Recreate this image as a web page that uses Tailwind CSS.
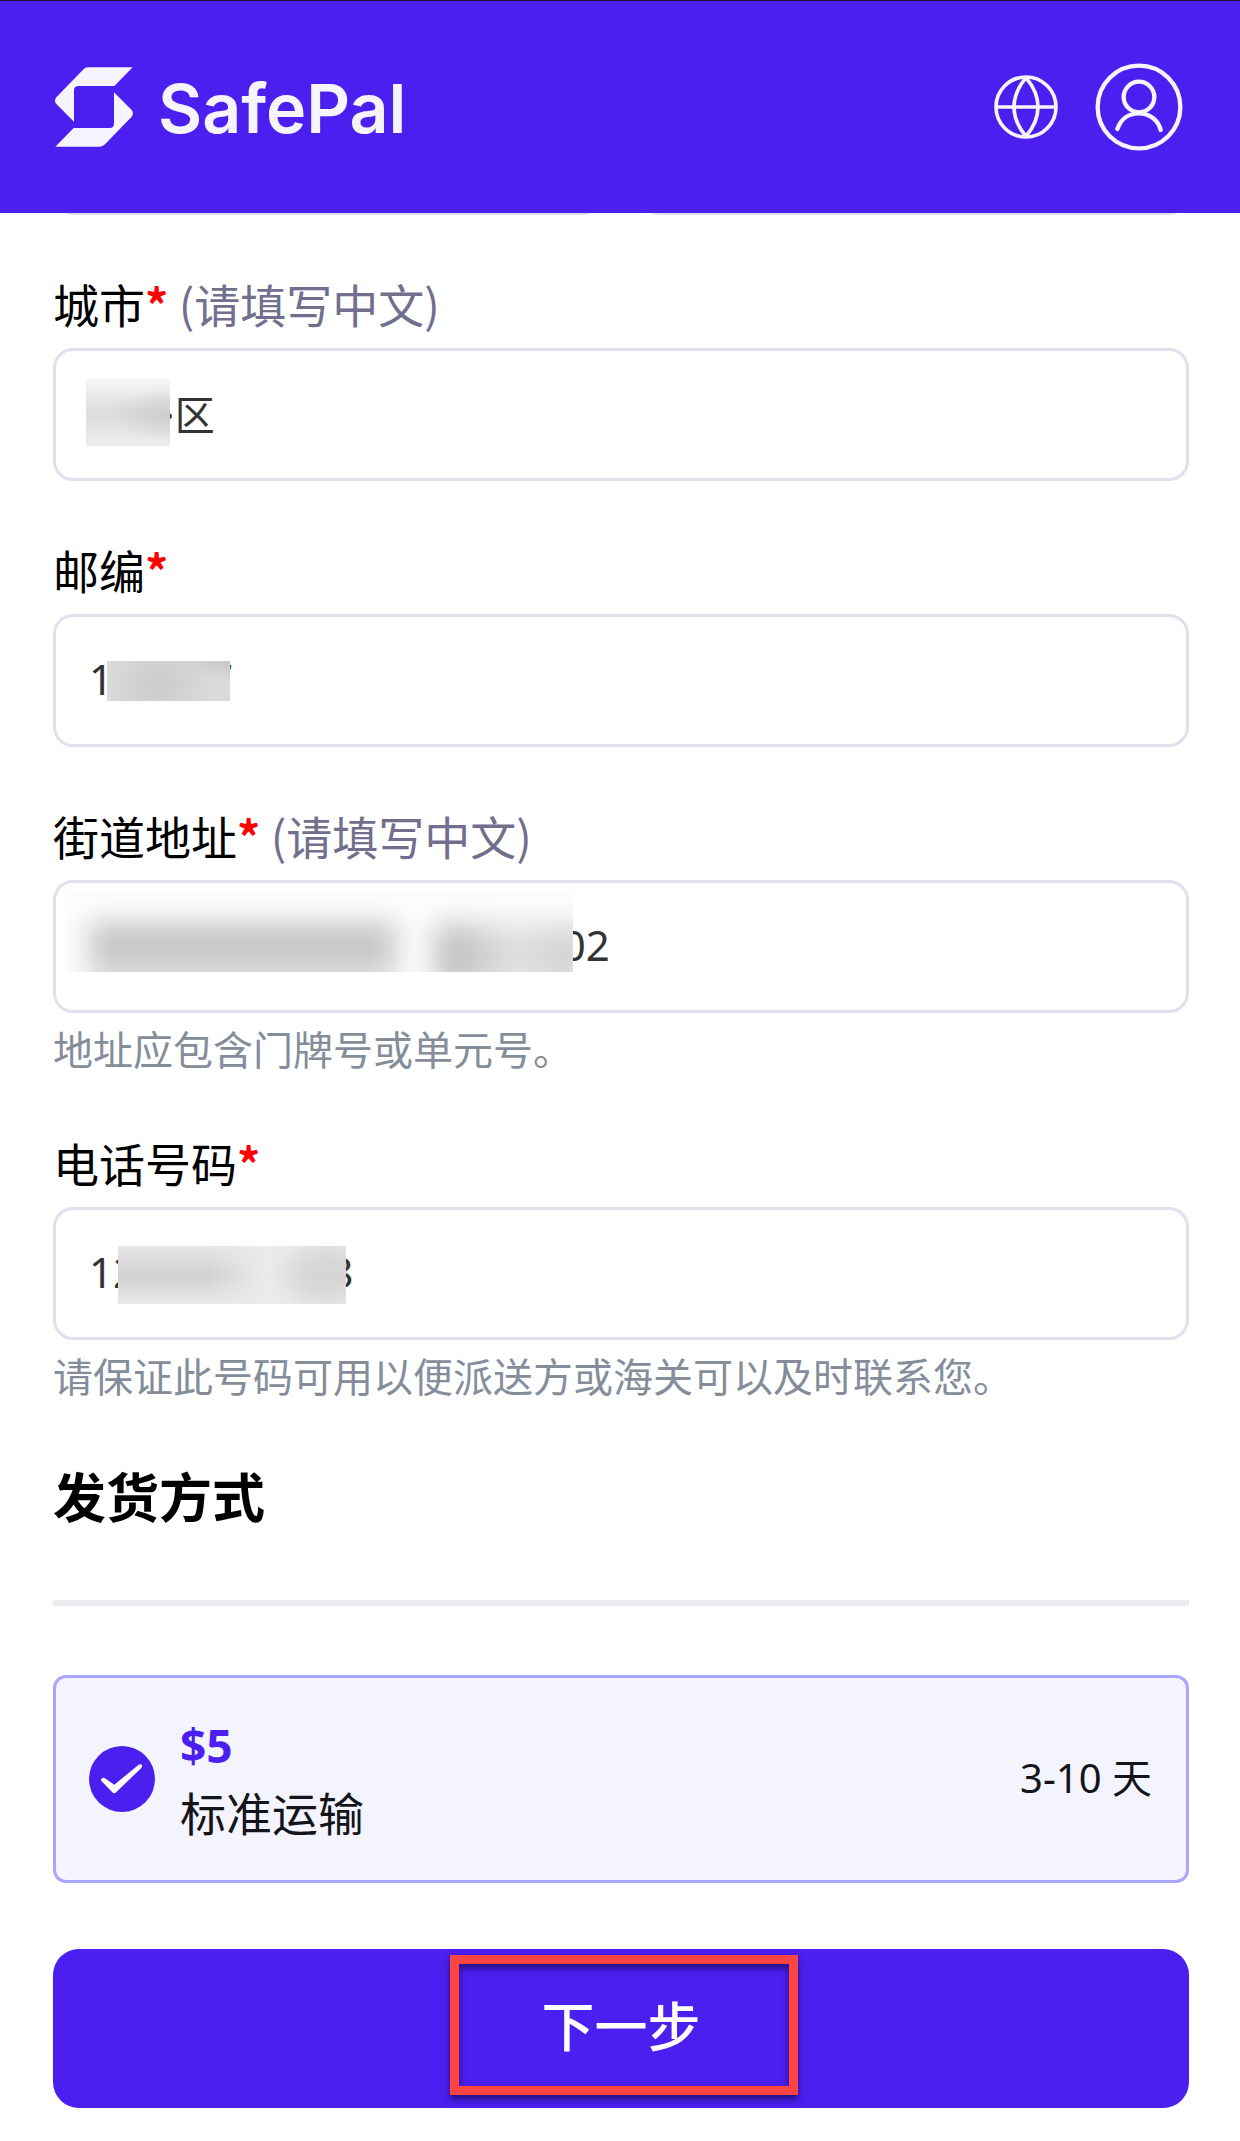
<!DOCTYPE html>
<html lang="zh-CN">
<head>
    <meta charset="UTF-8">
    <meta name="viewport" content="width=device-width, initial-scale=1.0">
    <title>SafePal</title>
    <script src="https://cdn.jsdelivr.net/npm/@tailwindcss/browser@4"></script>
</head>
<body class="bg-white text-black font-['Noto_Sans','Noto_Sans_CJK_SC',sans-serif]">
    <header class="relative z-10 flex items-center justify-between h-[213px] pl-[55px] pr-[57px] bg-[#4a1fef] border-t border-[#17123a]">
        <a href="#" class="flex items-center gap-[25px] text-[#f6f4ff]">
            <svg class="w-[78px] h-20" viewBox="165 201 234 240" fill="currentColor" aria-hidden="true">
                <path id="half" d="M264 202H398L343 258H234Q222 259 222 271V365L169 312Q161 302 169 292L249 209Q256 202 264 202Z"/>
                <use href="#half" transform="rotate(180 282 321)"/>
            </svg>
            <span class="pt-0.5 font-['Inter',sans-serif] font-semibold text-[68px] leading-20">SafePal</span>
        </a>
        <nav class="flex items-center gap-[37px] text-[#f6f4ff]">
            <button type="button" aria-label="语言">
                <svg class="size-16" viewBox="102 221 192 192" fill="none" stroke="currentColor" stroke-width="11">
                    <circle cx="198" cy="317" r="90"/>
                    <path d="M108 317H288M198 229C150 286 150 348 198 405M198 229C246 286 246 348 198 405"/>
                </svg>
            </button>
            <button type="button" aria-label="账户">
                <svg class="size-[88px]" viewBox="407 189 264 264" fill="none" stroke="currentColor" stroke-width="13" stroke-linecap="round">
                    <circle cx="539" cy="321" r="124"/>
                    <circle cx="539" cy="291" r="46"/>
                    <path d="M474 387C484 358 508 340 539 340C571 340 597 361 604 390"/>
                </svg>
            </button>
        </nav>
    </header>

    <form class="pl-[53px] pr-[51px] pb-8">
        <!-- previous row, scrolled under the header -->
        <div class="flex gap-9 -mt-[131px]">
            <input type="text" aria-label="省" class="flex-1 min-w-0 h-[133px] border-3 border-[#e2e0ee] rounded-[20px]">
            <input type="text" aria-label="区" class="flex-1 min-w-0 h-[133px] border-3 border-[#e2e0ee] rounded-[20px]">
        </div>

        <div class="mt-[49px]">
            <label for="city" class="block mb-1.5 text-[46px] leading-[78px] font-['Noto_Sans_CJK_SC',sans-serif]">城市<span class="text-[#ff0000] font-bold">*</span> <span class="text-[#716f8d]">(请填写中文)</span></label>
            <div class="relative">
                <input id="city" type="text" value="········区" class="block w-full h-[133px] px-[33px] pb-1 border-3 border-[#e2e0ee] rounded-[20px] text-[40px] text-[#333]">
                <div class="absolute left-[33px] top-[30px] w-[84px] h-[68px] bg-[#ececec] bg-[radial-gradient(ellipse_at_100%_54%,#cdcdcd,transparent_50%),linear-gradient(#f8f8f8,#dcdcdc_50%,#eeeeee)]"></div>
            </div>
        </div>

        <div class="mt-[49px]">
            <label for="zip" class="block mb-1.5 text-[46px] leading-[78px] font-['Noto_Sans_CJK_SC',sans-serif]">邮编<span class="text-[#ff0000] font-bold">*</span></label>
            <div class="relative">
                <input id="zip" type="text" value="100007" class="block w-full h-[133px] px-[33px] pb-1 border-3 border-[#e2e0ee] rounded-[20px] text-[42px] text-[#333]">
                <div class="absolute left-[54px] top-[47px] w-[123px] h-10 bg-[#dadada] bg-[radial-gradient(ellipse_at_100%_0%,#c8c8c8,transparent_35%),radial-gradient(circle_at_42%_60%,#cbcbcb,transparent_70%)]"></div>
            </div>
        </div>

        <div class="mt-[49px]">
            <label for="street" class="block mb-1.5 text-[46px] leading-[78px] font-['Noto_Sans_CJK_SC',sans-serif]">街道地址<span class="text-[#ff0000] font-bold">*</span> <span class="text-[#716f8d]">(请填写中文)</span></label>
            <div class="relative">
                <input id="street" type="text" value="··········································02" class="block w-full h-[133px] px-[33px] pb-1 border-3 border-[#e2e0ee] rounded-[20px] text-[42px] text-[#333]">
                <div class="absolute left-3 top-3 w-[508px] h-20 overflow-hidden bg-[#fdfdfd]">
                    <div class="flex gap-10 mt-8 ml-6 -mr-4 blur-[14px]">
                        <div class="flex-2 h-16 bg-linear-to-b from-[#b8b8b8] to-[#e0e0e0]"></div>
                        <div class="flex-1 h-16 bg-linear-to-r from-[#b8b8b8] via-[#e0e0e0] to-[#d0d0d0]"></div>
                    </div>
                </div>
            </div>
            <p class="mt-3.5 pb-0.5 text-[40px] leading-[45px] text-[#858d9b]">地址应包含门牌号或单元号。</p>
        </div>

        <div class="mt-[49px]">
            <label for="phone" class="block mb-1.5 text-[46px] leading-[78px] font-['Noto_Sans_CJK_SC',sans-serif]">电话号码<span class="text-[#ff0000] font-bold">*</span></label>
            <div class="relative">
                <input id="phone" type="tel" value="12000000008" class="block w-full h-[133px] px-[33px] pb-1 border-3 border-[#e2e0ee] rounded-[20px] text-[42px] text-[#333]">
                <div class="absolute left-[65px] top-[39px] w-[228px] h-[58px] bg-[#ebebeb] bg-[radial-gradient(circle_at_90%_50%,#d6d6d6,transparent_20%),linear-gradient(to_right,transparent_40%,#ebebeb_65%,transparent_90%),linear-gradient(#e6e6e6,#d1d1d1_50%,#e9e9e9)]"></div>
            </div>
            <p class="mt-3.5 pb-0.5 text-[40px] leading-[45px] text-[#858d9b]">请保证此号码可用以便派送方或海关可以及时联系您。</p>
        </div>

        <h2 class="mt-[55px] text-[53px] leading-[78px] font-bold font-['Noto_Sans_CJK_SC',sans-serif]">发货方式</h2>
        <hr class="mt-[66px] border-t-6 border-[#ebecf0]">

        <label class="relative flex items-center h-52 mt-[69px] pl-[33px] pr-[34px] bg-[#f4f4ff] border-3 border-[#aaa6ff] rounded-[13px] text-[#14151a]">
            <input type="radio" name="shipping" class="sr-only" checked>
            <svg class="size-[66px]" viewBox="0 0 198 198" aria-hidden="true">
                <circle cx="99" cy="99" r="99" fill="#4a1fef"/>
                <path d="M37 99Q43 92 50 98L76 116L149 56Q156 52 159 58Q160 62 157 66L80 140Q75 144 70 139L38 106Q34 102 37 99Z" fill="#fff"/>
            </svg>
            <span class="flex flex-col ml-[25px] text-[46px] leading-[68px]">
                <span class="font-bold text-[#4a1fef]">$5</span>
                <span>标准运输</span>
            </span>
            <span class="ml-auto pb-0.5 text-[40px]">3-10 天</span>
        </label>

        <button type="submit" class="relative flex items-center justify-center w-full h-[159px] mt-[66px] pb-2 rounded-[26px] bg-[#4a1fef] text-white text-[53px] font-medium font-['Noto_Sans_CJK_SC',sans-serif]">
            下一步
            <span class="absolute left-[397px] top-1.5 w-[348px] h-[140px] border-9 border-[#ff4444] shadow-[0_4px_6px_rgba(0,0,0,0.5),inset_0_4px_6px_rgba(0,0,0,0.5)]"></span>
        </button>
    </form>
</body>
</html>
